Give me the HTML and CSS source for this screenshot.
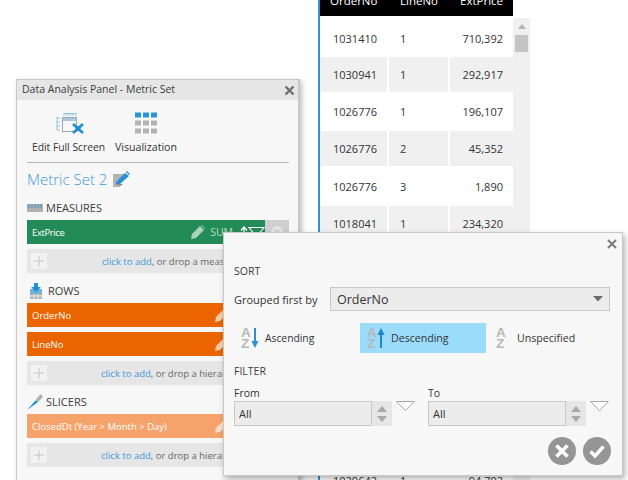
FILE: index.html
```html
<!DOCTYPE html>
<html lang="en">
<head>
<meta charset="utf-8">
<title>Data Analysis Panel</title>
<link rel="stylesheet" href="styles.css">
</head>
<body>
<main class="table-wrap">
  <div class="grid-table">
    <div class="head-row"><span class="c1">OrderNo</span><span class="c2">LineNo</span><span class="c3">ExtPrice</span></div>
    <div class="row first"><span class="c1">1031410</span><span class="c2">1</span><span class="c3">710,392</span></div>
    <div class="row alt"><span class="c1">1030941</span><span class="c2">1</span><span class="c3">292,917</span></div>
    <div class="row"><span class="c1">1026776</span><span class="c2">1</span><span class="c3">196,107</span></div>
    <div class="row alt"><span class="c1">1026776</span><span class="c2">2</span><span class="c3">45,352</span></div>
    <div class="row"><span class="c1">1026776</span><span class="c2">3</span><span class="c3">1,890</span></div>
    <div class="row alt"><span class="c1">1018041</span><span class="c2">1</span><span class="c3">234,320</span></div>
    <div class="row"><span class="c1">1018041</span><span class="c2">2</span><span class="c3">12,410</span></div>
    <div class="row alt"><span class="c1">1018041</span><span class="c2">3</span><span class="c3">8,275</span></div>
    <div class="row"><span class="c1">1017220</span><span class="c2">1</span><span class="c3">150,660</span></div>
    <div class="row alt"><span class="c1">1017220</span><span class="c2">2</span><span class="c3">76,008</span></div>
    <div class="row"><span class="c1">1016118</span><span class="c2">1</span><span class="c3">31,544</span></div>
    <div class="row alt pull"><span class="c1">1016118</span><span class="c2">2</span><span class="c3">22,130</span></div>
    <div class="row"><span class="c1">1029642</span><span class="c2">1</span><span class="c3">94,702</span></div>
  </div>
  <div class="scrollbar">
    <svg class="scroll-up" width="10" height="6" viewBox="0 0 10 6"><path d="M5 0 9 5H1z" fill="#b4b4b4"/></svg>
    <div class="scroll-thumb"></div>
  </div>
</main>

<section class="panel">
  <header class="panel-title">
    <span>Data Analysis Panel - Metric Set</span>
    <svg class="close" width="11" height="11" viewBox="0 0 11 11"><path d="M1.500 1.500 9.500 9.500M9.500 1.500 1.500 9.500" stroke="#6f6f6f" stroke-width="2.400"/></svg>
  </header>
  <div class="panel-body">
    <div class="toolbar">
      <div class="tool tool-edit">
        <svg width="28" height="22" viewBox="0 0 28 22">
          <path d="M8 1.500H20M8 1V4M11 1V4M14 1V4M17 1V4M20 1V4" stroke="#8fc3e2" fill="none"/>
          <path d="M1 5V18M1 6H4M1 10H4M1 14H4M1 18H4" stroke="#8fc3e2" fill="none"/>
          <rect x="6.500" y="5.500" width="14" height="14" fill="none" stroke="#9aa7b0"/>
          <rect x="7" y="6" width="13" height="3" fill="#a9c9de"/>
          <path d="M17 12 27 21M27 12 17 21" stroke="#1f8fd6" stroke-width="2.600"/>
          <circle cx="22" cy="16.500" r="2.500" fill="#1f8fd6"/>
        </svg>
        <span>Edit Full Screen</span>
      </div>
      <div class="tool tool-vis">
        <svg width="22" height="21" viewBox="0 0 22 21">
          <path d="M0 0h6v5H0zM8 0h6v5H8zM16 0h6v5h-6z" fill="#2a96d9"/>
          <path d="M0 8h6v5H0zM8 8h6v5H8zM16 8h6v5h-6zM0 16h6v5H0zM8 16h6v5H8zM16 16h6v5h-6z" fill="#b3b3b3"/>
        </svg>
        <span>Visualization</span>
      </div>
    </div>
    <h1 class="set-name">Metric Set 2
      <svg width="17" height="16" viewBox="0 0 17 16">
        <path d="M0 3h11v4L6 13v3H0z" fill="#b3b3b3"/>
        <path d="M6 16v-3h4z" fill="#8e8e8e"/>
        <path d="M3 11 12 2 16 5 7 13 3 14z" fill="#2a8fd4"/>
        <path d="M13 1l1-1 3 3-1 1z" fill="#2a8fd4"/>
      </svg>
    </h1>

    <h2 class="label label-measures">
      <svg width="16" height="8" viewBox="0 0 16 8"><rect width="16" height="8" fill="#b0b0b0"/><path d="M2 0V4M5 0V4M8 0V4M11 0V4M14 0V4" stroke="#3d93cc"/></svg>
      MEASURES
    </h2>
    <div class="bar green">
      <span class="bar-name narrow">ExtPrice</span>
      <svg class="pencil" width="14" height="14" viewBox="0 0 14 14"><path d="M0 14 1 9 9 1 13 5 5 13zM10 0 11 0 14 3 14 4z" fill="#a9d3bd"/></svg>
      <span class="sum">SUM</span>
      <svg class="sort-ico" width="8" height="12" viewBox="0 0 8 12"><path d="M4 12V2M1 4.500 4 1 7 4.500" stroke="#fff" fill="none" stroke-width="1.300"/></svg>
      <svg class="funnel" width="17" height="10" viewBox="0 0 17 10"><path d="M1 .5H16L8.500 9.500Z" fill="none" stroke="#fff" stroke-width="1.100"/></svg>
      <span class="bar-remove"><svg width="12" height="12" viewBox="0 0 12 12"><circle cx="6" cy="6" r="6" fill="#e4e4e4"/><path d="M3.500 3.500 8.500 8.500M8.500 3.500 3.500 8.500" stroke="#cfcfcf" stroke-width="1.500"/></svg></span>
    </div>
    <div class="add-row">
      <span class="plus"><svg width="10" height="10" viewBox="0 0 10 10"><path d="M5 0V10M0 5H10" stroke="#c4c4c4"/></svg></span>
      <span class="add-text add-measure"><a>click to add</a>, or drop a measure</span>
    </div>

    <h2 class="label label-rows">
      <svg width="14" height="16" viewBox="0 0 14 16"><path d="M1 6h12v10H1z" fill="#b5b5b5"/><path d="M1 6h12v5H1z" fill="#6fb2dd"/><path d="M5 0h4v4h3L7 9 2 4h3z" fill="#1f8fd6"/><path d="M1 13H13M5 11V16M9 11V16" stroke="#f7f7f7" stroke-width=".7"/></svg>
      ROWS
    </h2>
    <div class="bar orange">
      <span class="bar-name">OrderNo</span>
      <svg class="pencil pencil-row" width="14" height="14" viewBox="0 0 14 14"><path d="M0 14 1 9 9 1 13 5 5 13z" fill="#f8cba8"/></svg>
    </div>
    <div class="bar orange">
      <span class="bar-name">LineNo</span>
      <svg class="pencil pencil-row" width="14" height="14" viewBox="0 0 14 14"><path d="M0 14 1 9 9 1 13 5 5 13z" fill="#f8cba8"/></svg>
    </div>
    <div class="add-row">
      <span class="plus"><svg width="10" height="10" viewBox="0 0 10 10"><path d="M5 0V10M0 5H10" stroke="#c4c4c4"/></svg></span>
      <span class="add-text add-hier"><a>click to add</a>, or drop a hierarchy</span>
    </div>

    <h2 class="label label-slicers">
      <svg width="16" height="16" viewBox="0 0 16 16"><path d="M0 16 9 6 11 8Z" fill="#1f8fd6"/><path d="M9 5 14 0 16 3 11 8z" fill="#b0b0b0"/></svg>
      SLICERS
    </h2>
    <div class="bar peach">
      <span class="bar-name">ClosedDt (Year &gt; Month &gt; Day)</span>
      <svg class="pencil pencil-row" width="14" height="14" viewBox="0 0 14 14"><path d="M0 14 1 9 9 1 13 5 5 13z" fill="#fbdcc6"/></svg>
    </div>
    <div class="add-row">
      <span class="plus"><svg width="10" height="10" viewBox="0 0 10 10"><path d="M5 0V10M0 5H10" stroke="#c4c4c4"/></svg></span>
      <span class="add-text add-hier"><a>click to add</a>, or drop a hierarchy</span>
    </div>
  </div>
</section>

<section class="dialog">
  <svg class="dialog-close" width="10" height="10" viewBox="0 0 10 10"><path d="M1 1 9 9M9 1 1 9" stroke="#7a7a7a" stroke-width="2"/></svg>
  <h3 class="dlg-head head-sort">SORT</h3>
  <div class="group-row">
    <label>Grouped first by</label>
    <div class="select">
      <span>OrderNo</span>
      <svg width="10" height="6" viewBox="0 0 10 6"><path d="M0 0H10L5 5.500Z" fill="#6d6d6d"/></svg>
    </div>
  </div>
  <div class="sort-row">
    <div class="sort-opt opt-asc">
      <svg width="22" height="24" viewBox="0 0 22 24">
        <text x="0" y="11" class="az">A</text><text x="0" y="22" class="az">Z</text>
        <path d="M14 2V18" stroke="#2a8fd4" stroke-width="2"/><path d="M10.500 15H17.500L14 22Z" fill="#2a8fd4"/>
      </svg>
      <span>Ascending</span>
    </div>
    <div class="sort-opt opt-desc">
      <svg width="22" height="24" viewBox="0 0 22 24">
        <text x="0" y="11" class="az">A</text><text x="0" y="22" class="az">Z</text>
        <path d="M14 6V22" stroke="#1d86cf" stroke-width="2"/><path d="M10.500 9H17.500L14 2Z" fill="#1d86cf"/>
      </svg>
      <span>Descending</span>
    </div>
    <div class="sort-opt opt-none">
      <svg width="12" height="24" viewBox="0 0 12 24">
        <text x="0" y="11" class="az">A</text><text x="0" y="22" class="az">Z</text>
      </svg>
      <span>Unspecified</span>
    </div>
  </div>
  <h3 class="dlg-head head-filter">FILTER</h3>
  <div class="filter-row">
    <div class="filter-col">
      <label>From</label>
      <div class="range">
        <div class="range-input">All</div>
        <div class="spin">
          <svg width="10" height="22" viewBox="0 0 10 22"><path d="M5 3 10 9H0zM0 13H10L5 19z" fill="#a9a9a9"/></svg>
        </div>
        <svg class="tri" width="19" height="10" viewBox="0 0 19 10"><path d="M.5 .5H18.500L9.500 9.500Z" fill="#fff" stroke="#a5a5a5"/></svg>
      </div>
    </div>
    <div class="filter-col">
      <label>To</label>
      <div class="range">
        <div class="range-input">All</div>
        <div class="spin">
          <svg width="10" height="22" viewBox="0 0 10 22"><path d="M5 3 10 9H0zM0 13H10L5 19z" fill="#a9a9a9"/></svg>
        </div>
        <svg class="tri" width="19" height="10" viewBox="0 0 19 10"><path d="M.5 .5H18.500L9.500 9.500Z" fill="#fff" stroke="#a5a5a5"/></svg>
      </div>
    </div>
  </div>
  <div class="dlg-actions">
    <svg width="28" height="28" viewBox="0 0 28 28"><circle cx="14" cy="14" r="14" fill="#959595"/><path d="M8.500 8.500 19.500 19.500M19.500 8.500 8.500 19.500" stroke="#fff" stroke-width="3.600"/></svg>
    <svg width="28" height="28" viewBox="0 0 28 28"><circle cx="14" cy="14" r="14" fill="#959595"/><path d="M7.500 14.500 12 19 20.500 9.500" fill="none" stroke="#fff" stroke-width="3.400"/></svg>
  </div>
</section>
</body>
</html>
```
FILE: styles.css
```css
html, body { margin: 0; padding: 0; height: 480px; overflow: hidden; background: #fff; }
body { position: relative; width: 628px; font-family: "Open Sans", "Noto Sans", sans-serif; font-size: 10.500px; color: #333; }
h1, h2, h3 { margin: 0; font-weight: 400; }

/* data table behind the windows */
.table-wrap { display: flex; align-items: flex-start; margin-left: 318px; height: 480px; overflow: hidden; }
.grid-table { width: 193px; flex: none; border-left: 2px solid #2a96d3; }
.head-row { display: flex; align-items: center; height: 32px; margin-top: -16px; background: #000; color: #fff; font-size: 11.500px; }
.row { display: flex; height: 35px; margin-bottom: 2.200px; font-size: 11px; }
.row span, .head-row span { display: flex; align-items: center; box-sizing: border-box; }
.row.first { height: 37px; margin-top: 4px; margin-bottom: 0; }
.c1 { width: 67px; margin-right: 2px; padding-left: 13px; }
.c2 { width: 59px; margin-right: 2px; padding-left: 11px; }
.c3 { width: 63px; justify-content: flex-end; padding-right: 10px; }
.head-row .c1 { padding-left: 10px; }
.alt span { background: #f0f0f0; }
.row.pull { margin-bottom: -0.500px; }
.scrollbar { width: 17px; flex: none; height: 462px; margin-top: 18px; background: #f0f0f0; display: flex; flex-direction: column; align-items: center; padding-top: 6px; box-sizing: border-box; }
.scroll-thumb { width: 13px; height: 17px; margin-top: 5px; background: #c4c4c4; }

/* floating metric set panel */
.panel { position: absolute; left: 16px; top: 79px; width: 284px; height: 410px; box-sizing: border-box; border: 1px solid #c8c8c8; border-right-width: 2px; background: #f7f7f7; box-shadow: 2px 2px 5px rgba(0,0,0,.25); }
.panel-title { display: flex; align-items: center; justify-content: space-between; height: 20px; box-sizing: border-box; padding: 0 3px 3px 5px; background: #e6e6e6; color: #3c3c3c; }
.panel-title .close { margin-top: 3px; }
.panel-body { padding: 0 9px 0 10px; }
.toolbar { display: flex; height: 62px; border-bottom: 1px solid #b5b5b5; }
.tool { display: flex; flex-direction: column; align-items: center; font-size: 10.300px; }
.tool svg { margin-top: 12px; height: 22px; }
.tool span { margin-top: 6px; white-space: nowrap; }
.tool-edit { width: 83px; }
.tool-edit svg { margin-left: 3px; }
.tool-vis { width: 62px; margin-left: 5px; font-size: 10.600px; }
.set-name { display: flex; align-items: center; gap: 6px; margin-top: 4px; height: 24px; font-size: 15px; font-weight: 300; color: #3d9ad9; }
.label { display: flex; align-items: center; gap: 3px; height: 17px; font-size: 11px; color: #3c3c3c; }
.label-measures { margin-top: 8px; margin-bottom: 4px; }
.label-rows { margin-top: 9px; margin-bottom: 4px; gap: 5px; padding-left: 2px; }
.label-slicers { margin-top: 8px; margin-bottom: 4px; }
.bar { position: relative; display: flex; align-items: center; height: 24px; margin-bottom: 5px; padding-left: 5px; color: #fff; font-size: 9.500px; }
.bar-name { flex: 1; }
.narrow { letter-spacing: -.4px; }
.green { background: #238b57; }
.orange { background: #ec6400; }
.peach { background: #f6a36b; }
.pencil { margin-right: 5px; }
.pencil-row { margin-right: 60px; }
.sum { color: #b9dcc9; margin-right: 7px; font-size: 10.500px; }
.bar-remove { display: flex; align-items: center; justify-content: center; width: 24px; height: 24px; background: #cfcfcf; }
.add-row { display: flex; align-items: center; height: 24px; background: #e6e6e6; color: #666; font-size: 9.500px; white-space: nowrap; }
.plus { display: flex; align-items: center; justify-content: center; width: 16px; height: 16px; margin-left: 4px; background: #f2f2f2; }
.add-text a { color: #3d9ad9; }
.add-measure { margin-left: 55px; }
.add-hier { margin-left: 54px; }

/* sort & filter dialog */
.dialog { position: absolute; left: 223px; top: 232px; width: 400px; height: 244px; box-sizing: border-box; border: 1px solid #c8c8c8; background: #f7f7f7; box-shadow: 2px 3px 6px rgba(0,0,0,.3); padding: 0 10px; }
.dialog-close { position: absolute; right: 5px; top: 6px; }
.dlg-head { font-size: 10.500px; color: #3c3c3c; line-height: 14px; }
.head-sort { margin-top: 31px; }
.group-row { display: flex; align-items: center; margin-top: 9px; font-size: 11px; }
.group-row label { width: 96px; flex: none; white-space: nowrap; }
.select { flex: 0 0 280px; height: 24px; box-sizing: border-box; border: 1px solid #c8c8c8; background: #ececec; display: flex; align-items: center; justify-content: space-between; padding: 0 6px; font-size: 12.500px; }
.sort-row { display: flex; margin-top: 12px; height: 30px; margin-left: -4px; }
.sort-opt { display: flex; align-items: center; box-sizing: border-box; font-size: 10.300px; }
.sort-opt span { margin-left: 2px; }
.az { font-family: "Liberation Sans", sans-serif; font-size: 13.500px; font-weight: 700; fill: #b7b7b7; }
.opt-asc { width: 130px; padding-left: 11px; }
.opt-desc { width: 126px; padding-left: 7px; background: #9bdcfb; font-size: 10.600px; }
.opt-none { padding-left: 10px; font-size: 10.600px; }
.opt-none span { margin-left: 9px; }
.head-filter { margin-top: 11px; }
.filter-row { display: flex; gap: 13px; margin-top: 8px; }
.filter-col { width: 181px; }
.filter-col label { display: block; line-height: 15px; font-size: 10.500px; }
.range { display: flex; align-items: flex-start; }
.range-input { width: 139px; height: 25px; box-sizing: border-box; border: 1px solid #c8c8c8; background: #ececec; display: flex; align-items: center; padding-left: 4px; font-size: 11px; }
.spin { display: flex; align-items: center; justify-content: center; width: 20px; height: 25px; background: #e6e6e6; }
.tri { margin-left: 4px; }
.dlg-actions { display: flex; justify-content: flex-end; gap: 7px; margin-top: 11px; padding-right: 1px; }
```
